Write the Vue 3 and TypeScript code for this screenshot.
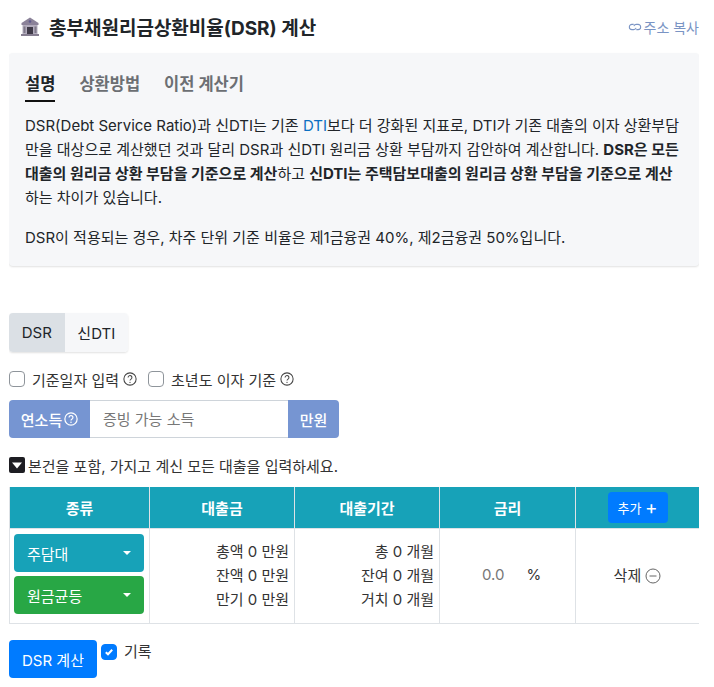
<script setup lang="ts">
import { ref } from "vue";

const tabs = ["설명", "상환방법", "이전 계산기"];
const activeTab = ref(0);
const mode = ref("DSR");
const record = ref(true);
const amounts = ["총액 0 만원", "잔액 0 만원", "만기 0 만원"];
const periods = ["총 0 개월", "잔여 0 개월", "거치 0 개월"];
</script>

<template>
  <div class="page">
    <header class="title-row">
      <h1>
        <svg class="bank" width="20" height="20" viewBox="0 0 20 20" aria-hidden="true">
          <path d="M10 0.500 1.500 6v2h17V6z" fill="#8b8299" />
          <circle cx="10" cy="4.500" r="1.300" fill="#5f5a8c" />
          <path d="M2.500 8h15v9h-15z" fill="#b3acbd" />
          <path d="M7 10h6v7H7z" fill="#3f3a48" />
          <path d="M3.500 9.500h2V16h-2zM14.500 9.500h2V16h-2z" fill="#7f7889" />
          <path d="M1 17h18v2H1z" fill="#857d90" />
        </svg>
        <span>총부채원리금상환비율(DSR) 계산</span>
      </h1>
      <a class="copy-link">
        <svg width="14" height="14" viewBox="0 0 16 16" fill="none" stroke="currentColor" stroke-width="1.200" aria-hidden="true">
          <path d="M6.500 5H4.500a3 3 0 0 0 0 6h2a3 3 0 0 0 2.800-2" />
          <path d="M9.500 11h2a3 3 0 0 0 0-6h-2a3 3 0 0 0-2.800 2" />
        </svg>
        주소 복사
      </a>
    </header>

    <section class="info-card">
      <nav class="tabs">
        <button
          v-for="(tab, i) in tabs"
          :key="tab"
          class="tab"
          :class="{ active: activeTab === i }"
          @click="activeTab = i"
        >
          {{ tab }}
        </button>
      </nav>
      <p>
        DSR(Debt Service Ratio)과 신DTI는 기존 <a class="link">DTI</a>보다 더 강화된 지표로, DTI가 기존 대출의 이자 상환부담만을 대상으로 계산했던 것과 달리 DSR과 신DTI 원리금 상환 부담까지 감안하여 계산합니다.
        <b>DSR은 모든 대출의 원리금 상환 부담을 기준으로 계산</b>하고 <b>신DTI는 주택담보대출의 원리금 상환 부담을 기준으로 계산</b>하는 차이가 있습니다.
      </p>
      <p>DSR이 적용되는 경우, 차주 단위 기준 비율은 제1금융권 40%, 제2금융권 50%입니다.</p>
    </section>

    <div class="mode-group">
      <button class="mode" :class="{ on: mode === 'DSR' }" @click="mode = 'DSR'">DSR</button>
      <button class="mode" :class="{ on: mode === '신DTI' }" @click="mode = '신DTI'">신DTI</button>
    </div>

    <div class="options">
      <label class="check"><span class="box"></span>기준일자 입력
        <svg class="help" width="14" height="14" viewBox="0 0 16 16" aria-hidden="true">
          <circle cx="8" cy="8" r="7" fill="none" stroke="currentColor" stroke-width="1.200" />
          <path d="M5.800 6.300a2.200 2.200 0 1 1 3.400 1.800c-.8.500-1.200 .9-1.200 1.700" fill="none" stroke="currentColor" stroke-width="1.200" />
          <circle cx="8" cy="11.800" r=".8" fill="currentColor" />
        </svg>
      </label>
      <label class="check"><span class="box"></span>초년도 이자 기준
        <svg class="help" width="14" height="14" viewBox="0 0 16 16" aria-hidden="true">
          <circle cx="8" cy="8" r="7" fill="none" stroke="currentColor" stroke-width="1.200" />
          <path d="M5.800 6.300a2.200 2.200 0 1 1 3.400 1.800c-.8.500-1.200 .9-1.200 1.700" fill="none" stroke="currentColor" stroke-width="1.200" />
          <circle cx="8" cy="11.800" r=".8" fill="currentColor" />
        </svg>
      </label>
    </div>

    <div class="income">
      <span class="addon left">연소득
        <svg width="14" height="14" viewBox="0 0 16 16" aria-hidden="true">
          <circle cx="8" cy="8" r="7" fill="none" stroke="currentColor" stroke-width="1.400" />
          <path d="M5.800 6.300a2.200 2.200 0 1 1 3.400 1.800c-.8.500-1.200 .9-1.200 1.700" fill="none" stroke="currentColor" stroke-width="1.400" />
          <circle cx="8" cy="11.800" r=".9" fill="currentColor" />
        </svg>
      </span>
      <input class="income-input" type="text" placeholder="증빙 가능 소득" />
      <span class="addon right">만원</span>
    </div>

    <p class="hint">
      <svg width="16" height="16" viewBox="0 0 16 16" aria-hidden="true">
        <rect width="16" height="16" rx="2" fill="#1d1d22" />
        <path d="M3 5.500h10L8 11.500z" fill="#fff" />
      </svg>
      본건을 포함, 가지고 계신 모든 대출을 입력하세요.
    </p>

    <table class="loans">
      <colgroup>
        <col class="c1" /><col class="c2" /><col class="c3" /><col class="c4" /><col class="c5" />
      </colgroup>
      <thead>
        <tr>
          <th>종류</th>
          <th>대출금</th>
          <th>대출기간</th>
          <th>금리</th>
          <th><button class="add">추가 <span class="plus">+</span></button></th>
        </tr>
      </thead>
      <tbody>
        <tr>
          <td class="kinds">
            <button class="select teal">주담대<i class="caret"></i></button>
            <button class="select green">원금균등<i class="caret"></i></button>
          </td>
          <td class="lines">
            <div v-for="line in amounts" :key="line">{{ line }}</div>
          </td>
          <td class="lines">
            <div v-for="line in periods" :key="line">{{ line }}</div>
          </td>
          <td class="rate"><span class="rate-value">0.0</span><span>%</span></td>
          <td class="remove">
            삭제
            <svg width="16" height="16" viewBox="0 0 16 16" fill="none" stroke="#555" stroke-width="0.900" aria-hidden="true">
              <circle cx="8" cy="8" r="7" />
              <path d="M4.500 8h7" />
            </svg>
          </td>
        </tr>
      </tbody>
    </table>

    <div class="actions">
      <button class="calc">DSR 계산</button>
      <label class="record" @click="record = !record">
        <span class="box checked">
          <svg v-if="record" width="12" height="12" viewBox="0 0 12 12" fill="none" stroke="#fff" stroke-width="2" aria-hidden="true">
            <path d="M2.800 6.200 5 8.300l4.200-4.500" />
          </svg>
        </span>
        <span class="record-text">기록</span>
      </label>
    </div>
  </div>
</template>

<style scoped>
.page {
  width: 690px;
  height: 687px;
  overflow: hidden;
  margin-left: 9px;
  font-family: Inter, "Noto Sans CJK KR", sans-serif;
  font-size: 15px;
  color: #212529;
  box-sizing: border-box;
}

.title-row {
  display: flex;
  align-items: center;
  justify-content: space-between;
  height: 53px;
}

h1 {
  margin: 0 0 0 11px;
  display: flex;
  align-items: center;
  gap: 9px;
  font-size: 19px;
  font-weight: 700;
}

.copy-link {
  display: flex;
  align-items: center;
  gap: 2px;
  color: #7a94c4;
  font-size: 14px;
}

.info-card {
  background: #f6f7f9;
  border-radius: 4px;
  box-shadow: 0 1px 2px rgba(0, 0, 0, 0.12);
  padding: 14px 16px 13px;
  height: 213px;
  box-sizing: border-box;
}

.tabs {
  display: flex;
  gap: 24px;
  margin-bottom: 12px;
}

.tab {
  border: 0;
  background: none;
  padding: 4px 0 5px;
  font: inherit;
  font-size: 16.500px;
  font-weight: 700;
  color: #6c6f73;
  border-bottom: 2px solid transparent;
}

.tab.active {
  color: #212529;
  border-bottom-color: #111;
}

.info-card p {
  margin: 0 0 16px;
  line-height: 24px;
  font-size: 15px;
  word-break: break-all;
}

.link {
  color: #0a6fc2;
}

.mode-group {
  display: inline-flex;
  margin-top: 47px;
  border-radius: 4px;
  box-shadow: 0 1px 2px rgba(0, 0, 0, 0.12);
  overflow: hidden;
  vertical-align: top;
}

.mode {
  border: 0;
  height: 39px;
  padding: 0 12.750px;
  font: inherit;
  background: #f6f7f9;
  color: #212529;
}

.mode.on {
  background: #dbe0e5;
}

.options {
  display: flex;
  gap: 11px;
  margin-top: 17px;
  height: 20px;
  align-items: center;
}

.check {
  display: flex;
  align-items: center;
  gap: 4px;
  font-size: 15px;
  color: #333;
}

.box {
  width: 16px;
  height: 16px;
  flex: none;
  box-sizing: border-box;
  border: 1px solid #8f959b;
  border-radius: 4px;
  background: #fff;
  margin-right: 3px;
  display: inline-flex;
  align-items: center;
  justify-content: center;
}

.box.checked {
  background: #007bff;
  border-color: #007bff;
}

.help {
  color: #444;
}

.income {
  display: flex;
  width: 330px;
  height: 38px;
  margin-top: 11px;
}

.addon {
  display: flex;
  align-items: center;
  justify-content: center;
  gap: 2px;
  background: #7695d2;
  color: #fff;
  font-weight: 500;
  font-size: 15px;
}

.addon.left {
  width: 81px;
  border-radius: 4px 0 0 4px;
}

.addon.right {
  width: 51px;
  border-radius: 0 4px 4px 0;
}

.income-input {
  flex: 1;
  min-width: 0;
  border: 1px solid #ced4da;
  border-width: 1px 0;
  padding: 0 13px;
  font: inherit;
  outline: none;
}

.income-input::placeholder {
  color: #777;
}

.hint {
  display: flex;
  align-items: center;
  gap: 3px;
  margin: 18px 0 0;
  height: 18px;
  font-size: 15px;
  color: #333;
}

.loans {
  width: 690px;
  margin-top: 13px;
  border-collapse: collapse;
  table-layout: fixed;
}

.c1 { width: 140px; }
.c2 { width: 145px; }
.c3 { width: 145px; }
.c4 { width: 136px; }
.c5 { width: 124px; }

th {
  height: 41px;
  padding: 0;
  background: #17a2b8;
  color: #fff;
  font-size: 15px;
  font-weight: 700;
  border: 1px solid #dee2e6;
  border-top: 0;
}

td {
  height: 95px;
  box-sizing: border-box;
  padding: 0;
  border: 1px solid #dee2e6;
  font-size: 15px;
  color: #333;
}

.add {
  border: 0;
  border-radius: 4px;
  background: #007bff;
  color: #fff;
  height: 31px;
  width: 60px;
  font: inherit;
  font-size: 13px;
  font-weight: 400;
}

.plus {
  font-size: 19px;
  font-weight: 400;
  line-height: 1;
  vertical-align: -1px;
}

.kinds {
  padding: 5px 4px;
  vertical-align: top;
}

.select {
  display: flex;
  align-items: center;
  justify-content: space-between;
  width: 130px;
  height: 38px;
  padding: 0 13px 0 13px;
  border: 0;
  border-radius: 4px;
  color: #fff;
  font: inherit;
  box-sizing: border-box;
}

.select + .select {
  margin-top: 4px;
}

.teal { background: #17a2b8; }
.green { background: #28a745; }

.caret {
  width: 0;
  height: 0;
  border: 4px solid transparent;
  border-top-color: #fff;
  border-bottom-width: 0;
}

.lines {
  text-align: right;
  padding-right: 5px;
  line-height: 24px;
}

.rate {
  text-align: center;
  padding-left: 8px;
  padding-bottom: 4px;
}

.rate-value {
  color: #777;
  margin-right: 22px;
}

.remove {
  text-align: center;
  padding-bottom: 4px;
}

.remove svg {
  vertical-align: -3px;
}

.actions {
  display: flex;
  align-items: flex-start;
  margin-top: 16px;
  gap: 4px;
}

.calc {
  width: 88px;
  height: 38px;
  border: 0;
  border-radius: 4px;
  background: #007bff;
  color: #fff;
  font: inherit;
}

.record {
  display: flex;
  align-items: center;
  gap: 4px;
  height: 18px;
  margin-top: 3px;
  color: #333;
}

.record-text {
  margin-top: -3px;
}
</style>

<style>
body {
  background: #fff;
}
</style>
